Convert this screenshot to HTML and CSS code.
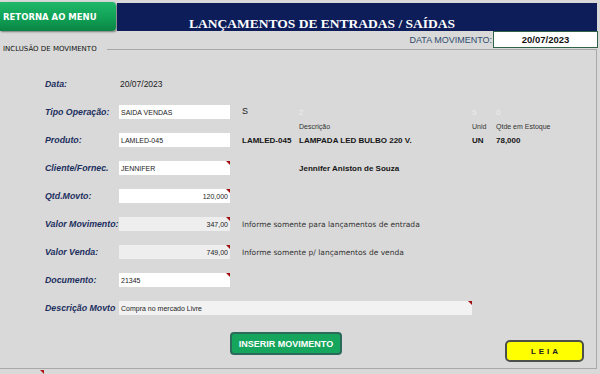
FILE: index.html
```html
<!DOCTYPE html>
<html lang="pt-BR">
<head>
    <meta charset="UTF-8">
    <meta name="viewport" content="width=device-width, initial-scale=1.0">
    <title>Lançamentos de Entradas / Saídas</title>
    <link rel="stylesheet" href="styles.css">
</head>
<body>
    <div class="top">
        <button class="menu-btn">RETORNA AO MENU</button>
        <div class="title-bar">
            <h1>LANÇAMENTOS DE ENTRADAS / SAÍDAS</h1>
        </div>
    </div>

    <div class="date-row">
        <span class="date-label">DATA MOVIMENTO:</span>
        <span class="date-box">20/07/2023</span>
    </div>

    <fieldset class="panel">
        <legend>INCLUSÃO DE MOVIMENTO</legend>

        <div class="form">
            <div class="row">
                <label>Data:</label>
                <span class="plain">20/07/2023</span>
            </div>

            <div class="row">
                <label>Tipo Operação:</label>
                <span class="field">SAIDA VENDAS</span>
                <div class="extra">
                    <span class="letter">S</span>
                    <span class="faint">2</span>
                    <span class="faint">5</span>
                    <span class="faint">0</span>
                </div>
            </div>

            <div class="row">
                <label>Produto:</label>
                <span class="field">LAMLED-045</span>
                <div class="extra product">
                    <span></span>
                    <span class="head">Descrição</span>
                    <span class="head">Unid</span>
                    <span class="head">Qtde em Estoque</span>
                    <b>LAMLED-045</b>
                    <b>LAMPADA LED BULBO 220 V.</b>
                    <b>UN</b>
                    <b>78,000</b>
                </div>
            </div>

            <div class="row">
                <label>Cliente/Fornec.</label>
                <span class="field note">JENNIFER</span>
                <div class="extra">
                    <span></span>
                    <b class="wide">Jennifer Aniston de Souza</b>
                </div>
            </div>

            <div class="row">
                <label>Qtd.Movto:</label>
                <span class="field num note">120,000</span>
            </div>

            <div class="row">
                <label>Valor Movimento:</label>
                <span class="field num gray note">347,00</span>
                <span class="hint">Informe somente para lançamentos de entrada</span>
            </div>

            <div class="row">
                <label>Valor Venda:</label>
                <span class="field num gray note">749,00</span>
                <span class="hint">Informe somente p/ lançamentos de venda</span>
            </div>

            <div class="row">
                <label>Documento:</label>
                <span class="field note">21345</span>
            </div>

            <div class="row">
                <label>Descrição Movto</label>
                <span class="field long note">Compra no mercado Livre</span>
            </div>
        </div>

        <div class="actions">
            <button class="insert-btn">INSERIR MOVIMENTO</button>
            <button class="leia-btn">LEIA</button>
        </div>
    </fieldset>

    <div class="foot"><i class="mark"></i></div>
</body>
</html>
```

FILE: styles.css
```css
body {
    margin: 0;
    width: 600px;
    height: 374px;
    overflow: hidden;
    background-color: #d9d9d9;
    font-family: "Liberation Sans", Arial, sans-serif;
    color: #222;
}

button {
    border: none;
    padding: 0;
    cursor: pointer;
}

/* Header */
.top {
    display: flex;
    height: 31px;
}

.menu-btn {
    width: 116px;
    height: 29px;
    margin-top: 2px;
    padding-left: 3px;
    text-align: left;
    background: linear-gradient(#1fb86a, #10a155 55%, #0a8444);
    color: #fff;
    font: bold 8.5px "DejaVu Sans", sans-serif;
    border-radius: 0 4px 4px 0;
    box-shadow: 1px 1px 2px rgba(0, 0, 0, 0.45);
}

.title-bar {
    flex: 1;
    margin: 3px 3px 0 1px;
    padding: 0 0 1px 72px;
    display: flex;
    align-items: flex-end;
    background-color: #0d1d5a;
}

h1 {
    margin: 0;
    font: bold 13.5px "Liberation Serif", "Times New Roman", serif;
    line-height: 1;
    color: #fff;
}

.date-row {
    display: flex;
    justify-content: flex-end;
    align-items: center;
    height: 17px;
    margin-right: 2px;
}

.date-label {
    font-size: 9px;
    color: #2f4b6e;
    margin-right: 1px;
}

.date-box {
    width: 105px;
    height: 17px;
    box-sizing: border-box;
    border: 1px solid #2f6247;
    background-color: #fff;
    text-align: center;
    font-size: 9.5px;
    font-weight: bold;
    line-height: 15px;
    color: #111;
}

/* Panel */
.panel {
    margin: -3px 3px 0 0;
    padding: 0;
    min-width: 0;
    border: none;
    border-top: 1px solid #a8a8a8;
    border-right: 1px solid #a8a8a8;
    border-bottom: 1px solid #a8a8a8;
}

.panel legend {
    padding: 0 10px 0 3px;
    font: 7px "DejaVu Sans", sans-serif;
    line-height: 8px;
    color: #111;
}

.form {
    padding-top: 17px;
}

.row {
    display: flex;
    align-items: center;
    height: 28px;
    padding-left: 45px;
}

.row label {
    width: 74px;
    flex: none;
    white-space: nowrap;
    font-size: 8.8px;
    font-weight: bold;
    font-style: italic;
    color: #1c2f5e;
}

.plain {
    font-size: 8.5px;
    padding-left: 1px;
}

.field {
    position: relative;
    flex: none;
    box-sizing: border-box;
    width: 111px;
    height: 14px;
    padding: 0 2px;
    background-color: #fff;
    font-size: 7px;
    line-height: 15px;
}

.field.num {
    text-align: right;
}

.field.gray {
    background-color: #eeeeee;
}

.field.long {
    width: 353px;
    background-color: #f2f2f2;
}

/* little red comment corner */
.field.note::after {
    content: "";
    position: absolute;
    top: 0;
    right: 0;
    border-top: 4px solid #a30d0d;
    border-left: 4px solid transparent;
}

.extra {
    display: grid;
    grid-template-columns: 57px 173px 24px auto;
    align-items: center;
    margin-left: 12px;
    font-size: 8px;
}

.extra b {
    color: #151515;
}

.extra .wide {
    grid-column: 2 / 5;
}

.letter {
    font-size: 9px;
    margin-top: -2px;
}

.faint {
    color: rgba(255, 255, 255, 0.55);
    font-size: 8px;
    margin-top: 1px;
}

.extra.product {
    grid-template-rows: 12px 16px;
    margin-top: -12px;
}

.head {
    font-size: 7px;
    color: #333;
}

.hint {
    margin-left: 12px;
    font: 7.5px "DejaVu Sans", sans-serif;
    color: #333;
}

/* Buttons */
.actions {
    display: flex;
    align-items: flex-start;
    padding: 10px 12px 6px 230px;
}

.insert-btn {
    width: 112px;
    height: 23px;
    box-sizing: border-box;
    border: 2px solid #2c6b5c;
    border-radius: 4px;
    background-color: #15a55c;
    color: #fff;
    font: bold 9px "Liberation Sans", Arial, sans-serif;
}

.leia-btn {
    margin-left: auto;
    margin-top: 8px;
    width: 79px;
    height: 22px;
    box-sizing: border-box;
    border: 2px solid #4b504b;
    border-radius: 5px;
    background-color: #ffff00;
    color: #222;
    font: bold 8px "Liberation Sans", Arial, sans-serif;
    letter-spacing: 3px;
    padding-left: 3px;
}

.foot {
    padding: 1px 0 0 40px;
}

.mark {
    display: block;
    width: 0;
    height: 0;
    border-top: 4px solid #b01818;
    border-left: 4px solid transparent;
}
```
